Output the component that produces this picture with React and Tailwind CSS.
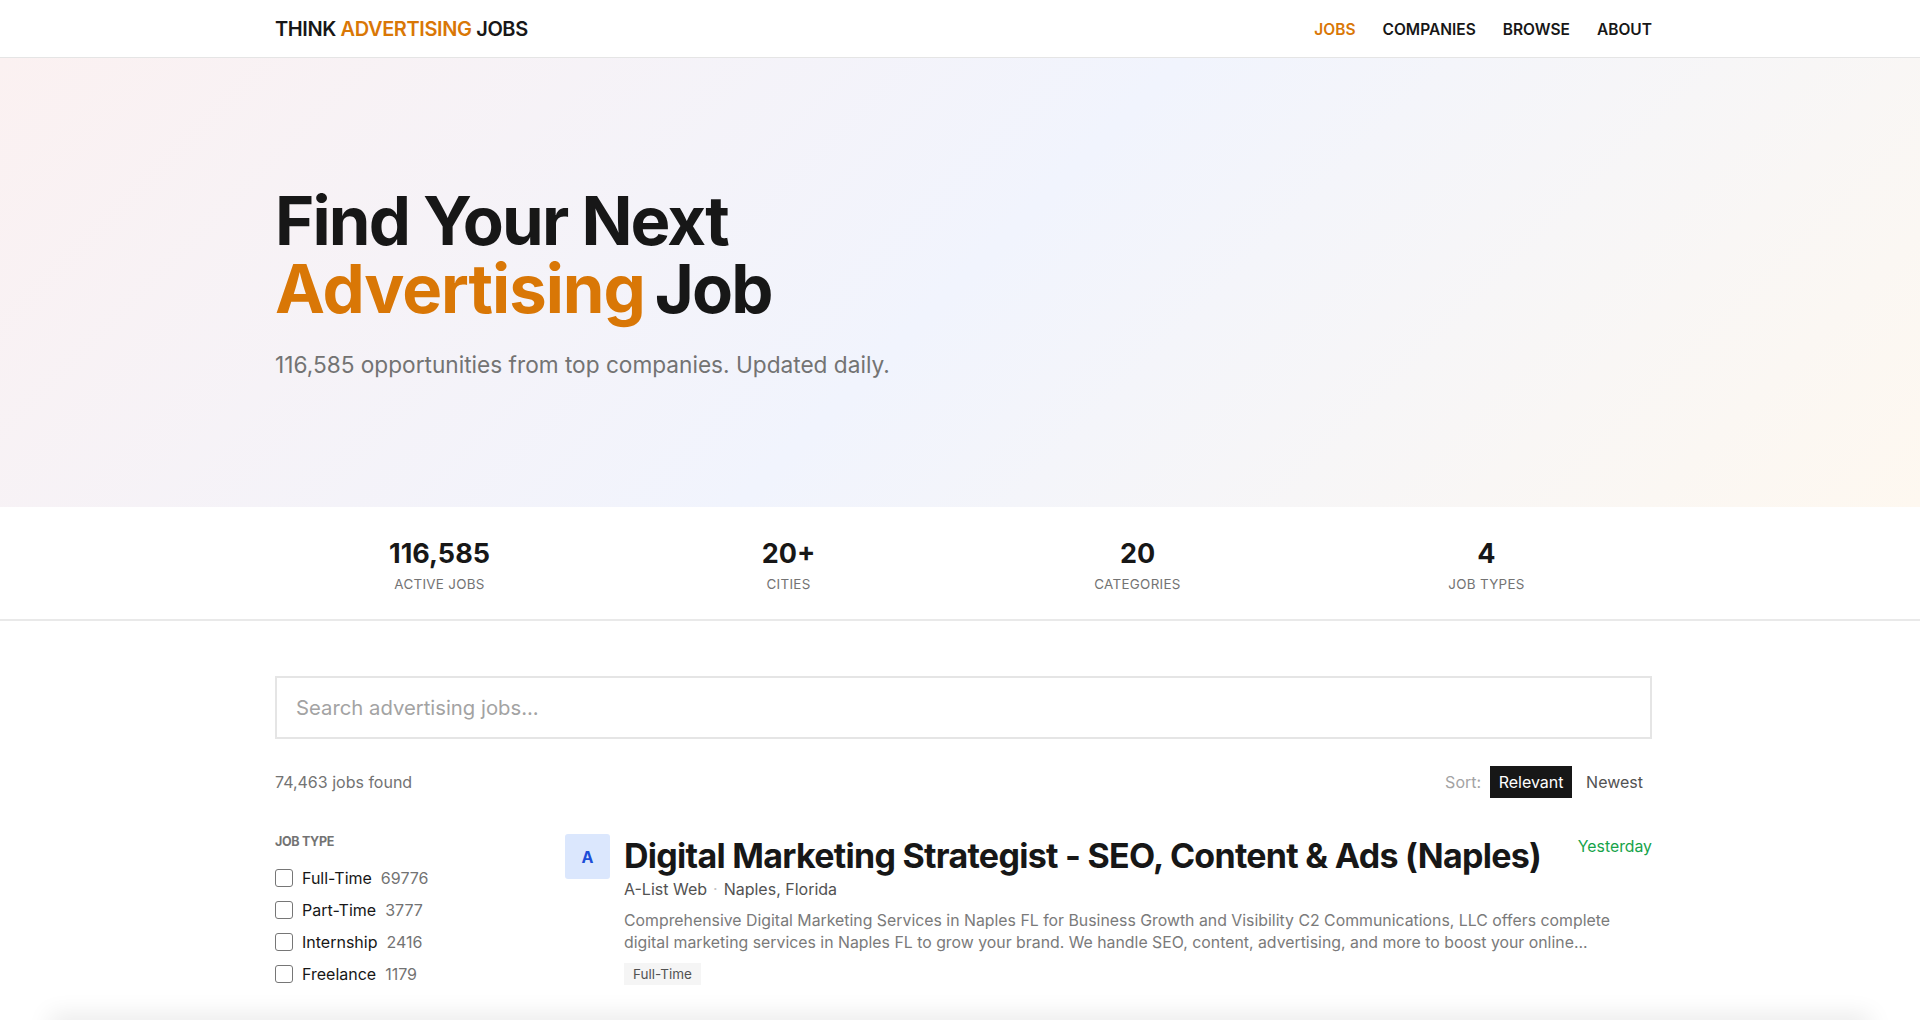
import React from 'react';

const stats = [
  ['116,585', 'Active Jobs'],
  ['20+', 'Cities'],
  ['20', 'Categories'],
  ['4', 'Job Types'],
];

const jobTypes = [
  ['Full-Time', '69776'],
  ['Part-Time', '3777'],
  ['Internship', '2416'],
  ['Freelance', '1179'],
];

const App = () => {
  return (
    <div className="relative h-[1020px] overflow-hidden bg-white font-['Inter',sans-serif] text-[#171717]">
      <header className="h-[58px] border-b border-[#e5e5e5] bg-white">
        <div className="ml-[275px] flex h-full w-[1377px] items-center justify-between">
          <div className="text-[20px] font-semibold tracking-[-0.4px]">
            THINK <span className="text-[#d97706]">ADVERTISING</span> JOBS
          </div>
          <nav className="flex gap-[27px] pt-[2px] text-[15.5px] font-semibold">
            <a className="text-[#d97706]">JOBS</a>
            <a>COMPANIES</a>
            <a>BROWSE</a>
            <a>ABOUT</a>
          </nav>
        </div>
      </header>

      <section className="h-[449px] bg-[linear-gradient(135deg,#fbf1f1_0%,#f1f4fd_50%,#fef8f0_100%)] pt-[129px]">
        <div className="ml-[275px] w-[1377px]">
          <h1 className="text-[67px] leading-[68px] font-bold tracking-[-1.85px]">
            Find Your Next
            <br />
            <span className="mr-[-4px] tracking-[-1.05px] text-[#d97706]">Advertising</span> Job
          </h1>
          <p className="mt-[26px] text-[22.65px] leading-8 text-[#737373]">116,585 opportunities from top companies. Updated daily.</p>
        </div>
      </section>

      <section className="h-[114px] border-b-2 border-[#e9e9e9] bg-white">
        <div className="ml-[265px] grid w-[1396px] grid-cols-4 pt-[29px] text-center">
          {stats.map(([value, label]) => (
            <div key={label}>
              <div className="text-[27px] leading-[36px] font-bold">{value}</div>
              <div className="mt-[2px] text-[13.4px] leading-5 tracking-[0.3px] text-[#737373] uppercase">{label}</div>
            </div>
          ))}
        </div>
      </section>

      <main className="ml-[275px] w-[1377px] pt-[55px]">
        <input
          placeholder="Search advertising jobs..."
          className="h-[63px] w-full border-2 border-[#e5e5e5] px-[19px] text-[20.3px] outline-none placeholder:text-[#a3a3a3]"
        />

        <div className="mt-[27px] flex h-[32px] items-center justify-between text-[16px]">
          <span className="text-[#737373]">74,463 jobs found</span>
          <div className="flex items-center">
            <span className="mr-[9px] text-[#a3a3a3]">Sort:</span>
            <span className="flex h-[32px] w-[82px] items-center justify-center bg-[#171717] text-white">Relevant</span>
            <span className="mr-[9px] ml-[14px] text-[#525252]">Newest</span>
          </div>
        </div>

        <div className="mt-[36px] flex">
          <aside className="w-[290px] shrink-0">
            <h3 className="text-[12.5px] leading-[15px] font-bold tracking-[-0.3px] text-[#737373] uppercase">Job Type</h3>
            <ul className="mt-[13px] flex flex-col">
              {jobTypes.map(([label, count]) => (
                <li key={label} className="flex h-[32px] items-center text-[16px]">
                  <span className="h-[18px] w-[18px] rounded-[3px] border-[1.5px] border-[#767676] bg-white" />
                  <span className="ml-[9px]">{label}</span>
                  <span className="ml-[9px] text-[#737373]">{count}</span>
                </li>
              ))}
            </ul>
            <h3 className="mt-[30px] text-[12.5px] leading-[15px] font-bold tracking-[-0.3px] text-[#737373] uppercase">Category</h3>
          </aside>

          <article className="flex min-w-0 flex-1">
            <div className="flex h-[45px] w-[45px] shrink-0 items-center justify-center rounded-[3px] bg-[#dbe7fd] text-[16px] font-bold text-[#1d4ed8]">A</div>
            <div className="ml-[14px] min-w-0 flex-1">
              <div className="flex items-start justify-between">
                <h2 className="text-[34px] leading-[43px] font-bold tracking-[-0.72px]">Digital Marketing Strategist - SEO, Content &amp; Ads (Naples)</h2>
                <span className="mt-[1px] text-[15.8px] text-[#16a34a]">Yesterday</span>
              </div>
              <div className="mt-[2px] flex items-center text-[16px] leading-[21px] text-[#525252]">
                <span>A-List Web</span>
                <span className="mx-[6px] text-[#c4c4c4]">·</span>
                <span>Naples, Florida</span>
              </div>
              <p className="mt-[10px] text-[15.85px] leading-[22.4px] text-[#7a7a7a]">
                Comprehensive Digital Marketing Services in Naples FL for Business Growth and Visibility C2 Communications, LLC offers complete digital marketing services in Naples FL to grow your brand. We handle SEO, content, advertising, and more to boost your online...
              </p>
              <span className="mt-[8px] inline-block h-[22px] bg-[#f5f5f5] px-[9px] text-[13.5px] leading-[22px] text-[#525252]">Full-Time</span>
            </div>
          </article>
        </div>
      </main>

      {/* soft shadow along the bottom edge */}
      <div className="pointer-events-none absolute inset-x-[50px] bottom-[-20px] h-[20px] shadow-[0_-4px_24px_rgba(0,0,0,0.1)]" />
    </div>
  );
};

export default App;
